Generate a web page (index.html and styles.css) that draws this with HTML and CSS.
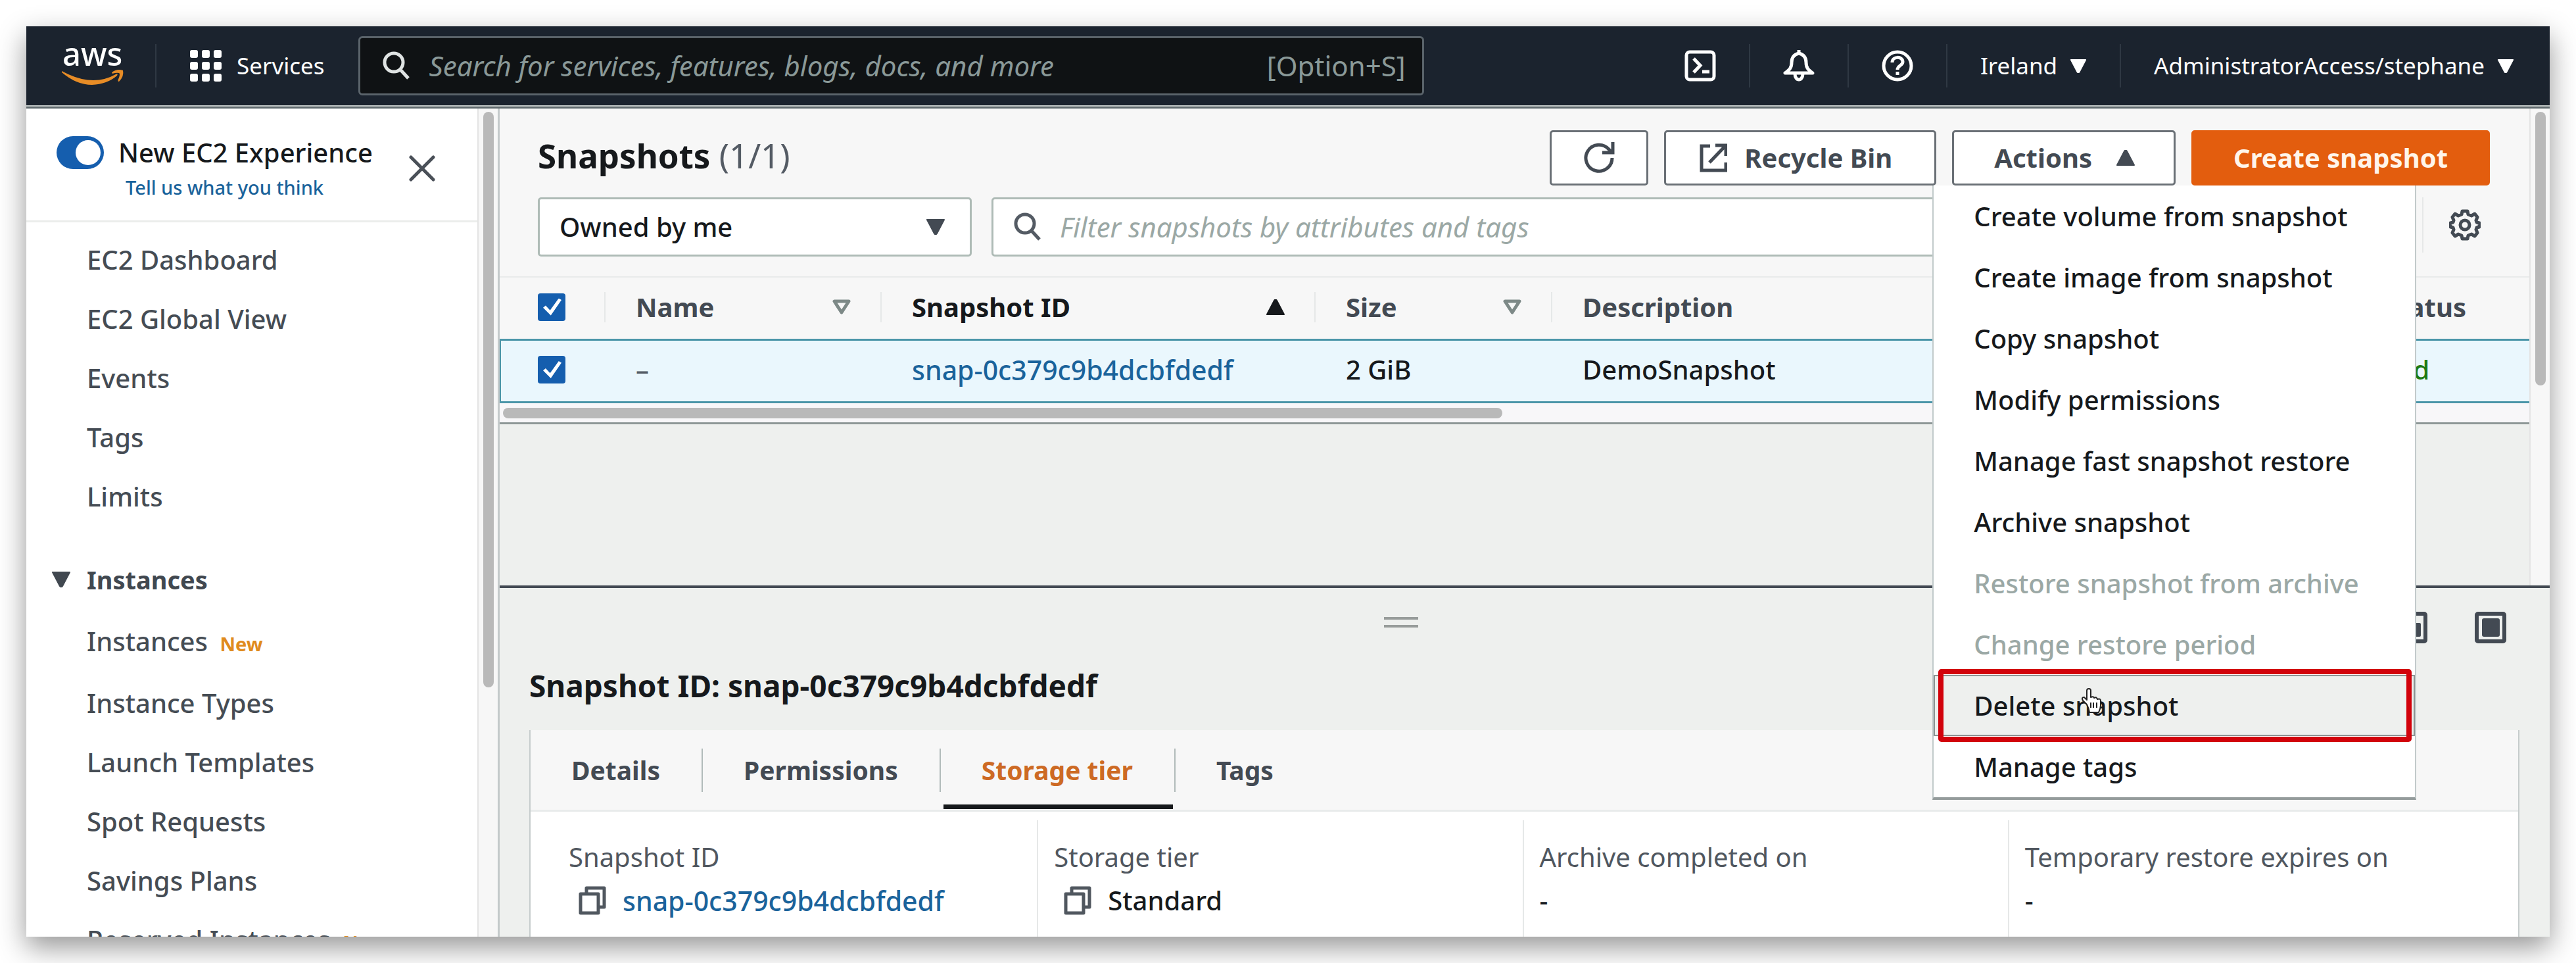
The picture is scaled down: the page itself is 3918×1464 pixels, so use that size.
FILE: index.html
```html
<!DOCTYPE html>
<html lang="en">
<head>
<meta charset="utf-8">
<meta name="viewport" content="width=device-width, initial-scale=1">
<title>Snapshots | EC2 Management Console</title>
<link rel="stylesheet" href="styles.css">
</head>
<body>
<svg class="defs" aria-hidden="true">
  <symbol id="i-search" viewBox="0 0 42 44"><circle cx="17" cy="17" r="14" fill="none" stroke="currentColor" stroke-width="5"/><path d="M27 28 39 41" fill="none" stroke="currentColor" stroke-width="5"/></symbol>
  <symbol id="i-down" viewBox="0 0 30 24"><path d="M2 1h26L17 22q-2 3-4 0z" fill="currentColor" stroke="currentColor" stroke-width="2" stroke-linejoin="round"/></symbol>
  <symbol id="i-up" viewBox="0 0 30 24"><path d="M2 23h26L17 2q-2-3-4 0z" fill="currentColor" stroke="currentColor" stroke-width="2" stroke-linejoin="round"/></symbol>
  <symbol id="i-sort" viewBox="0 0 30 24"><path d="M4 3h22L15 20z" fill="none" stroke="currentColor" stroke-width="5" stroke-linejoin="round"/></symbol>
  <symbol id="i-copy" viewBox="0 0 42 44"><path d="M12 11V3h27v29h-8M3 12h27v29H3z" fill="none" stroke="currentColor" stroke-width="5" stroke-linejoin="round"/></symbol>
</svg>

<div class="window">
  <header class="topbar">
    <a class="logo" href="#" aria-label="AWS home">
      <svg width="96" height="60" viewBox="0 0 96 60">
        <text class="logo-text" x="1" y="30">aws</text>
        <path d="M0 38Q4 40 10 43 30 52 48 52 66 52 82 43 86 41 84 45 69 58 46 59 22 59 0 40z" fill="#e78c26"/>
        <path d="M76 40Q84 34 93 37 95 46 87 54 84 54 87 48 89 42 87 41 83 40 77 42z" fill="#e78c26"/>
      </svg>
    </a>
    <button class="services" type="button">
      <svg width="48" height="48" viewBox="0 0 48 48" fill="#fff"><rect width="12" height="12" rx="3"/><rect x="18" width="12" height="12" rx="3"/><rect x="36" width="12" height="12" rx="3"/><rect y="18" width="12" height="12" rx="3"/><rect x="18" y="18" width="12" height="12" rx="3"/><rect x="36" y="18" width="12" height="12" rx="3"/><rect y="36" width="12" height="12" rx="3"/><rect x="18" y="36" width="12" height="12" rx="3"/><rect x="36" y="36" width="12" height="12" rx="3"/></svg>
      Services
    </button>
    <label class="global-search">
      <svg class="ico-search"><use href="#i-search"/></svg>
      <input type="search" aria-label="Search services" placeholder="Search for services, features, blogs, docs, and more">
      <span>[Option+S]</span>
    </label>
    <nav class="top-tools" aria-label="Account">
      <button type="button" aria-label="CloudShell"><svg width="48" height="48" viewBox="0 0 48 48" fill="none" stroke="#fff" stroke-width="5"><rect x="3" y="3" width="42" height="42" rx="5"/><path d="M14 13l10 10.500L14 34M27 33h11"/></svg></button>
      <button type="button" aria-label="Notifications"><svg width="48" height="48" viewBox="0 0 48 48" fill="none" stroke="#fff" stroke-width="5" stroke-linejoin="round"><path d="M24 5c-8 2-11 7-11 14 0 8-3 11-10 16h42c-7-5-10-8-10-16 0-7-3-12-11-14z"/><path d="M24 0v6M18 36c0 12 12 12 12 0"/></svg></button>
      <button type="button" aria-label="Help"><svg width="48" height="48" viewBox="0 0 48 48" fill="none" stroke="#fff" stroke-width="5"><circle cx="24" cy="24" r="21"/><path d="M16 19c0-10 16-10 16-1 0 6-8 5-8 12M24 33v5"/></svg></button>
      <button type="button">Ireland <svg class="ico-caret-s"><use href="#i-down"/></svg></button>
      <button type="button">AdministratorAccess/stephane <svg class="ico-caret-s"><use href="#i-down"/></svg></button>
    </nav>
  </header>

  <div class="app">
    <aside class="sidebar">
      <div class="side-content">
        <div class="side-head">
          <div>
            <label class="switch"><input type="checkbox" role="switch" checked> New EC2 Experience</label>
            <a class="feedback" href="#">Tell us what you think</a>
          </div>
          <button type="button" class="close" aria-label="Close navigation"><svg width="40" height="40" viewBox="0 0 40 40" fill="none" stroke="#4a5058" stroke-width="5" stroke-linecap="round"><path d="M3 3l34 34M37 3L3 37"/></svg></button>
        </div>
        <nav class="side-nav" aria-label="EC2">
          <a href="#">EC2 Dashboard</a>
          <a href="#">EC2 Global View</a>
          <a href="#">Events</a>
          <a href="#">Tags</a>
          <a href="#">Limits</a>
          <button type="button" class="group"><svg class="ico-caret"><use href="#i-down"/></svg>Instances</button>
          <a class="first" href="#">Instances <b>New</b></a>
          <a href="#">Instance Types</a>
          <a href="#">Launch Templates</a>
          <a href="#">Spot Requests</a>
          <a href="#">Savings Plans</a>
          <a href="#">Reserved Instances <b>New</b></a>
        </nav>
      </div>
      <div class="vscroll"><i class="thumb-side"></i></div>
    </aside>

    <main class="main">
      <section class="list-pane">
        <div class="list-body">
          <div class="list-head">
            <div class="title-row">
              <h1>Snapshots <span>(1/1)</span></h1>
              <button type="button" class="btn refresh" aria-label="Refresh"><svg width="48" height="50" viewBox="0 0 48 50" fill="none" stroke="currentColor" stroke-width="5"><path d="M44 25A20 20 0 1 1 39 12l5 5"/><path d="M45 1v16H29"/></svg></button>
              <a class="btn recycle" href="#"><svg width="42" height="44" viewBox="0 0 42 44" fill="none" stroke="currentColor" stroke-width="5"><path d="M16 4H3v37h37V29M24 3h16v16M39 4L15 29"/></svg>Recycle Bin</a>
              <div class="actions">
                <button type="button" class="btn" aria-expanded="true" aria-haspopup="menu">Actions <svg class="ico-caret"><use href="#i-up"/></svg></button>
                <div class="menu" role="menu">
                  <button type="button" role="menuitem">Create volume from snapshot</button>
                  <button type="button" role="menuitem">Create image from snapshot</button>
                  <button type="button" role="menuitem">Copy snapshot</button>
                  <button type="button" role="menuitem">Modify permissions</button>
                  <button type="button" role="menuitem">Manage fast snapshot restore</button>
                  <button type="button" role="menuitem">Archive snapshot</button>
                  <button type="button" role="menuitem" disabled>Restore snapshot from archive</button>
                  <button type="button" role="menuitem" disabled>Change restore period</button>
                  <button type="button" role="menuitem" class="hovered">Delete snapshot
                    <svg class="pointer" width="32" height="38" viewBox="0 0 32 38" fill="#fff" stroke="#222" stroke-width="2" stroke-linejoin="round"><path d="M9 25 3 19q-3-5 2-5l4 4V4q0-3 3-3t3 3v10q4-2 5 1 4-2 5 2 5-2 5 3v6q0 5-3 11H13q-1-6-4-12z"/><path d="M15 22v8M19 22v8M24 22v8" fill="none"/></svg>
                  </button>
                  <button type="button" role="menuitem">Manage tags</button>
                </div>
              </div>
              <button type="button" class="btn primary">Create snapshot</button>
            </div>
            <div class="filter-row">
              <div class="owner">
                <select aria-label="Ownership"><option>Owned by me</option><option>Public snapshots</option><option>Private snapshots</option></select>
                <svg class="ico-caret"><use href="#i-down"/></svg>
              </div>
              <label class="filter">
                <svg class="ico-search"><use href="#i-search"/></svg>
                <input type="search" aria-label="Filter snapshots" placeholder="Filter snapshots by attributes and tags">
              </label>
              <button type="button" class="gear" aria-label="Preferences"><svg width="48" height="48" viewBox="0 0 48 48" fill="none" stroke="currentColor" stroke-width="5" stroke-linejoin="round"><path d="M20 3h8l1 5 5 2 5-3 4 5-2 5 1 3 4 1v6l-4 1-1 3 2 5-4 5-5-3-5 2-1 5h-8l-1-5-5-2-5 3-4-5 2-5-1-3-4-1v-6l4-1 1-3-2-5 4-5 5 3 5-2z"/><circle cx="24" cy="24" r="7"/></svg></button>
            </div>
          </div>
          <div class="table-wrap">
            <table>
              <colgroup><col class="c-check"><col class="c-name"><col class="c-id"><col class="c-size"><col class="c-desc"><col class="c-status"></colgroup>
              <thead>
                <tr>
                  <th><input type="checkbox" class="check" aria-label="Select all" checked></th>
                  <th><div>Name <svg class="ico-sort"><use href="#i-sort"/></svg></div></th>
                  <th class="sorted"><div>Snapshot ID <svg class="ico-caret"><use href="#i-up"/></svg></div></th>
                  <th><div>Size <svg class="ico-sort"><use href="#i-sort"/></svg></div></th>
                  <th><div>Description <svg class="ico-sort"><use href="#i-sort"/></svg></div></th>
                  <th><div>Snapshot status <svg class="ico-sort"><use href="#i-sort"/></svg></div></th>
                </tr>
              </thead>
              <tbody>
                <tr>
                  <td><input type="checkbox" class="check" aria-label="Select snapshot" checked></td>
                  <td class="empty">–</td>
                  <td><a class="id" href="#">snap-0c379c9b4dcbfdedf</a></td>
                  <td>2 GiB</td>
                  <td>DemoSnapshot</td>
                  <td class="ok"><svg width="40" height="40" viewBox="0 0 40 40" fill="none" stroke="currentColor" stroke-width="4"><circle cx="20" cy="20" r="17"/><path d="M12 20l6 6 10-12"/></svg>Completed</td>
                </tr>
              </tbody>
            </table>
          </div>
          <div class="hscroll"><i></i></div>
        </div>
        <div class="vscroll"><i class="thumb-list"></i></div>
      </section>

      <section class="split-pane">
        <div class="split-bar">
          <div class="handle"><i></i></div>
          <div class="layouts">
            <button type="button" aria-label="Bottom panel"><svg width="48" height="48" viewBox="0 0 48 48"><rect x="3" y="3" width="42" height="42" rx="2" fill="none" stroke="currentColor" stroke-width="6"/><rect x="10" y="24" width="28" height="14" rx="2" fill="currentColor"/></svg></button>
            <button type="button" aria-label="Side panel"><svg width="48" height="48" viewBox="0 0 48 48"><rect x="3" y="3" width="42" height="42" rx="2" fill="none" stroke="currentColor" stroke-width="6"/><rect x="20" y="17" width="18" height="21" rx="2" fill="currentColor"/></svg></button>
            <button type="button" aria-label="Full panel"><svg width="48" height="48" viewBox="0 0 48 48"><rect x="3" y="3" width="42" height="42" rx="2" fill="none" stroke="currentColor" stroke-width="6"/><rect x="11" y="10" width="27" height="28" rx="3" fill="currentColor"/></svg></button>
          </div>
        </div>
        <h2>Snapshot ID: snap-0c379c9b4dcbfdedf</h2>
        <div class="card">
          <div class="tabs" role="tablist">
            <button type="button" role="tab"><span>Details</span></button>
            <button type="button" role="tab"><span>Permissions</span></button>
            <button type="button" role="tab" aria-selected="true"><span>Storage tier</span></button>
            <button type="button" role="tab"><span>Tags</span></button>
          </div>
          <dl class="facts">
            <div><dt>Snapshot ID</dt><dd><button type="button" class="copy" aria-label="Copy snapshot ID"><svg class="ico-copy"><use href="#i-copy"/></svg></button><a class="id" href="#">snap-0c379c9b4dcbfdedf</a></dd></div>
            <div><dt>Storage tier</dt><dd><button type="button" class="copy" aria-label="Copy storage tier"><svg class="ico-copy"><use href="#i-copy"/></svg></button>Standard</dd></div>
            <div><dt>Archive completed on</dt><dd>-</dd></div>
            <div><dt>Temporary restore expires on</dt><dd>-</dd></div>
          </dl>
        </div>
      </section>
    </main>
  </div>
</div>
</body>
</html>
```
FILE: styles.css
```css
* { box-sizing: border-box; }
body {
  margin: 0;
  padding: 40px;
  height: 100vh;
  overflow: hidden;
  background: #fff;
  color: #16191c;
  font: 500 40px/56px "Noto Sans", sans-serif;
}
button, input, select { font: inherit; color: inherit; }
button { background: none; border: 0; padding: 0; margin: 0; text-align: left; }
a { color: #1a639b; text-decoration: none; }
.id { font-size: 41px; }
svg { display: block; flex: none; }
.defs { position: absolute; width: 0; height: 0; }
.ico-search { width: 42px; height: 44px; }
.ico-caret, .ico-sort { width: 30px; height: 24px; }
.ico-caret-s { width: 26px; height: 21px; }
.ico-copy { width: 42px; height: 44px; }

.window {
  display: flex;
  flex-direction: column;
  height: 100%;
  overflow: hidden;
  box-shadow: 0 16px 40px rgba(0, 0, 0, .42);
}

/* top bar */
.topbar {
  flex: none;
  display: flex;
  align-items: center;
  height: 122px;
  padding-left: 54px;
  background: #1b232e;
  border-bottom: 2px solid #c3c8c8;
  color: #fff;
  font-size: 35px;
  font-weight: 400;
}
.logo { padding-right: 46px; }
.logo svg { overflow: visible; }
.logo-text { fill: #fff; font-size: 49px; font-weight: 500; }
.services {
  display: flex;
  align-items: center;
  gap: 23px;
  height: 66px;
  padding: 0 51px;
  border-left: 2px solid #2f3843;
}
.global-search {
  display: flex;
  align-items: center;
  width: 1621px;
  height: 90px;
  padding: 0 25px 0 34px;
  background: #0f1214;
  border: 3px solid #5a636a;
  border-radius: 6px;
  color: #8a9998;
  font-size: 42px;
}
.global-search svg { color: #dfe3e3; }
.global-search input {
  flex: 1;
  min-width: 0;
  padding: 0 0 0 29px;
  background: none;
  border: 0;
  outline: 0;
}
input::placeholder { color: #8a9998; font-style: italic; font-weight: 400; opacity: 1; }
.top-tools { display: flex; margin-left: auto; }
.top-tools button {
  display: flex;
  align-items: center;
  gap: 19px;
  height: 66px;
  padding: 0 50px;
  border-left: 2px solid #2f3843;
}
.top-tools button:first-child { border-left: 0; }
.top-tools button:last-child { padding-right: 54px; }

/* shell */
.app { flex: 1; min-height: 0; display: flex; border-top: 3px solid #5f696d; }
.sidebar { flex: 0 0 720px; display: flex; background: #fff; border-right: 3px solid #c4c9ca; }
.side-content { flex: 1; overflow: hidden; }
.vscroll { flex: 0 0 29px; padding: 5px 6px 0 7px; background: #f7f7f7; border-left: 2px solid #e4e4e4; }
.vscroll i { display: block; width: 16px; border-radius: 8px; background: #b9b9b9; }
.thumb-side { height: 875px; }
.thumb-list { height: 416px; }

.side-head {
  display: flex;
  align-items: center;
  justify-content: space-between;
  padding: 38px 64px 26px 46px;
  border-bottom: 3px solid #ebedeb;
}
.switch { display: flex; align-items: center; gap: 22px; line-height: 58px; }
.switch input {
  appearance: none;
  width: 72px;
  height: 50px;
  margin: 0;
  padding: 6px 3px 6px 29px;
  border-radius: 25px;
  background: #155eae;
}
.switch input::before { content: ""; display: block; width: 38px; height: 38px; border-radius: 50%; background: #fff; }
.feedback { display: block; padding-left: 105px; font-size: 29px; line-height: 48px; }
.side-nav { display: flex; flex-direction: column; padding: 12px 0 0 92px; line-height: 90px; }
.side-nav a { color: #454c54; white-space: nowrap; }
.side-nav .first { padding-top: 4px; }
.side-nav b { margin-left: 8px; color: #e08b1d; font-size: 29px; }
.group {
  display: flex;
  align-items: center;
  gap: 24px;
  margin: 36px 0 0 -54px;
  color: #414850;
  font-size: 38px;
  font-weight: 700;
}

/* list pane */
.main { flex: 1; min-width: 0; display: grid; grid-template-rows: 725px 1fr; background: #eef0ee; }
.list-pane { display: flex; min-width: 0; }
.list-body { flex: 1; min-width: 0; }
.list-head { padding: 33px 60px 30px 58px; background: #f7f7f7; }
.title-row, .filter-row { display: flex; }
.title-row { gap: 24px; }
h1 { flex: 1; margin: 0; font-size: 51px; line-height: 76px; }
h1 span { font-weight: 400; color: #545b64; }
.btn {
  display: flex;
  align-items: center;
  height: 84px;
  padding: 0 58px;
  background: #fff;
  border: 3px solid #6a7076;
  border-radius: 5px;
  color: #434a53;
  font-weight: 700;
  white-space: nowrap;
}
.refresh { padding: 0 48px; }
.recycle { gap: 26px; padding: 0 64px 0 51px; }
.actions { position: relative; }
.actions .btn { gap: 36px; padding: 0 58px 0 61px; }
.primary { padding: 0 61px; background: #e35d0e; border-color: #e35d0e; color: #fff5ea; }
.menu {
  position: absolute;
  z-index: 2;
  top: 100%;
  left: -30px;
  width: 736px;
  background: #fff;
  border: solid #c2cacb;
  border-width: 0 2px 4px;
  border-bottom-color: #949b9b;
}
.menu button { display: block; width: 100%; padding-left: 61px; line-height: 93px; white-space: nowrap; }
.menu button:disabled { color: #9ba8a5; }
.menu .hovered { position: relative; background: #eef0ee; box-shadow: inset 0 0 0 2px #8d9494; }
.menu .hovered::after {
  content: "";
  position: absolute;
  inset: -9px 5px -9px 7px;
  border: 8px solid #d2020b;
  border-radius: 5px;
}
.pointer { position: absolute; left: 224px; top: 20px; }

.filter-row { gap: 30px; margin-top: 18px; }
.owner { display: grid; align-items: center; width: 660px; }
.owner > * { grid-area: 1 / 1; }
.owner svg { justify-self: end; margin-right: 40px; color: #434a53; pointer-events: none; }
select {
  appearance: none;
  width: 100%;
  height: 90px;
  padding: 0 30px;
  background: #fff;
  border: 3px solid #aebbb6;
  border-radius: 5px;
}
.filter {
  flex: 1;
  display: flex;
  align-items: center;
  height: 90px;
  padding-left: 31px;
  background: #fff;
  border: 3px solid #aebbb6;
  border-radius: 5px;
  color: #545b64;
  font-size: 42px;
}
.filter input { flex: 1; padding: 0 0 0 28px; border: 0; background: none; outline: 0; }
.filter input::placeholder { color: #9ba8a5; }
.gear { height: 84px; padding: 0 14px 0 39px; border-left: 2px solid #e6e8e8; color: #434a53; }

.table-wrap { overflow: hidden; border-top: 2px solid #e9ebeb; background: #f7f7f7; }
table { table-layout: fixed; width: 3160px; border-collapse: separate; border-spacing: 0; }
.c-check { width: 159px; }
.c-name { width: 420px; }
.c-id { width: 660px; }
.c-size { width: 360px; }
.c-desc { width: 1023px; }
.c-status { width: 538px; }
th { height: 93px; padding: 0 0 4px; text-align: left; color: #434a53; font-weight: 700; }
th div {
  display: flex;
  align-items: center;
  justify-content: space-between;
  height: 46px;
  padding: 0 44px 0 46px;
  border-left: 2px solid #e6e8e8;
}
th svg { color: #7d8987; }
.sorted, .sorted svg { color: #16191c; }
td {
  height: 98px;
  padding: 0 0 4px 48px;
  background: #eaf7fd;
  border: solid #4a95a8;
  border-width: 3px 0;
}
td:first-child { border-left-width: 2px; padding-left: 56px; }
th:first-child { padding-left: 58px; }
.empty { color: #545b64; }
.ok { color: #1d7a12; }
.ok svg { display: inline-block; vertical-align: -5px; margin-right: 16px; }
.check {
  appearance: none;
  display: block;
  width: 42px;
  height: 42px;
  margin: 0;
  padding: 8px;
  border-radius: 4px;
  background: #155eae;
}
.check::before {
  content: "";
  display: block;
  width: 28px;
  height: 26px;
  background: #fff;
  clip-path: polygon(0 55%, 14% 42%, 38% 70%, 85% 0, 100% 10%, 42% 100%);
}
.hscroll { height: 32px; padding: 7px 5px 0; background: #f8f7f9; border-bottom: 3px solid #8d9796; }
.hscroll i { display: block; width: 49.4%; height: 16px; border-radius: 8px; background: #b9b9b9; }

/* split pane */
.split-pane { min-width: 0; overflow: hidden; border-top: 4px solid #434a53; }
.split-bar { display: flex; padding-top: 36px; }
.handle { flex: 1; display: flex; justify-content: center; padding-top: 8px; }
.handle i { width: 52px; height: 16px; border: solid #979c9a; border-width: 4px 0; }
.layouts { display: flex; gap: 72px; padding: 0 66px 0 22px; color: #434a53; }
h2 { margin: 32px 0 36px 45px; font-size: 46px; line-height: 64px; }
.card { height: 400px; margin: 0 46px 0 45px; background: #fff; border: solid #c6cccc; border-width: 0 2px; }
.tabs { display: flex; height: 124px; background: #f7f7f7; border-bottom: 3px solid #e9ebeb; }
.tabs button { position: relative; color: #434a53; font-size: 39px; font-weight: 700; }
.tabs span { display: block; padding: 0 63px 0 62px; line-height: 66px; border-right: 2px solid #b1bbba; }
.tabs button:last-child span { border: 0; }
.tabs [aria-selected] { color: #cd6a24; }
.tabs [aria-selected]::after { content: ""; position: absolute; inset: auto 4px 1px; height: 7px; background: #16191c; }
.facts { display: grid; grid-template-columns: repeat(4, 1fr); height: 100%; margin: 0; padding: 13px 38px 0 32px; line-height: 66px; }
.facts > div { padding: 23px 0 0 24px; border-left: 2px solid #e6e8e8; }
.facts > div:first-child { border-left-color: transparent; }
dt { color: #50575f; font-weight: 400; }
dd { display: flex; align-items: center; margin: 0; }
.copy { padding: 0 25px 0 15px; color: #50575f; }
```
